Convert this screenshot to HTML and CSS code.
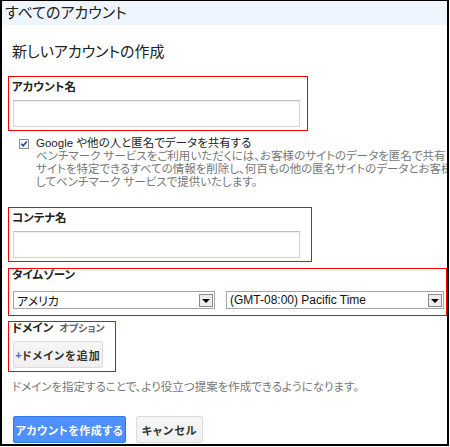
FILE: index.html
```html
<!DOCTYPE html>
<html lang="ja">
<head>
<meta charset="utf-8">
<title>新しいアカウントの作成</title>
<link rel="stylesheet" href="styles.css">
</head>
<body>
<div class="frame">
  <div class="topbar">すべてのアカウント</div>
  <div class="content">
    <h1 class="title">新しいアカウントの作成</h1>

    <div class="field field-account">
      <div class="label">アカウント名</div>
      <div class="input"></div>
    </div>

    <div class="share">
      <span class="checkbox">
        <svg width="10" height="10" viewBox="0 0 10 10">
          <rect x="0.5" y="0.5" width="9" height="9" fill="#f3f3f5" stroke="#8c8c8c"/>
          <path d="M2.3 4.8 L4.1 6.8 L7.8 2.4" fill="none" stroke="#2a4596" stroke-width="1.6"/>
        </svg>
      </span>
      <div class="share-text">
        <div class="share-main">Google や他の人と匿名でデータを共有する</div>
        <div class="share-desc">ベンチマーク サービスをご利用いただくには、お客様のサイトのデータを匿名で共有していただく</div>
        <div class="share-desc">サイトを特定できるすべての情報を削除し、何百もの他の匿名サイトのデータとお客様のデータを統合</div>
        <div class="share-desc">してベンチマーク サービスで提供いたします。</div>
      </div>
    </div>

    <div class="field field-container">
      <div class="label">コンテナ名</div>
      <div class="input"></div>
    </div>

    <div class="field field-tz">
      <div class="label label-tight">タイムゾーン</div>
      <div class="selects">
        <div class="select select-country"><span class="select-text">アメリカ</span><span class="select-btn"></span></div>
        <div class="select select-zone"><span class="select-text">(GMT-08:00) Pacific Time</span><span class="select-btn"></span></div>
      </div>
    </div>

    <div class="field field-domain">
      <div class="label label-tight">ドメイン <span class="optional">オプション</span></div>
      <div class="btn btn-add"><span class="plus">+</span>ドメインを追加</div>
    </div>

    <div class="hint">ドメインを指定することで、より役立つ提案を作成できるようになります。</div>

    <div class="actions">
      <div class="btn btn-primary">アカウントを作成する</div>
      <div class="btn btn-cancel">キャンセル</div>
    </div>
  </div>
</div>
</body>
</html>
```

FILE: styles.css
```css
html, body {
  margin: 0;
  padding: 0;
  background: #fff;
}

.frame {
  width: 449px;
  height: 446px;
  box-sizing: border-box;
  border: 2px solid #000;
  border-top: 1px solid #000;
  overflow: hidden;
  background: #fff;
  font-family: "Liberation Sans", "Noto Sans CJK JP", sans-serif;
  font-feature-settings: "palt";
  color: #222;
}

.topbar {
  height: 24px;
  line-height: 24px;
  background: #eef5fe;
  padding-left: 3px;
  font-size: 15px;
  white-space: nowrap;
}

.content {
  padding: 0 0 0 6px;
}

.title {
  margin: 17px 0 0 4px;
  font-size: 15px;
  font-weight: normal;
  line-height: 20px;
}

.field {
  box-sizing: border-box;
  border: 1px solid #f00;
  padding: 1px 0 3px 3px;
}

.field-account {
  width: 300px;
  margin-top: 14px;
}

.field-container {
  width: 304px;
  margin-top: 18px;
}

.field-tz {
  width: 439px;
  margin-top: 6px;
  padding-bottom: 6px;
}

.field-domain {
  width: 108px;
  margin-top: 5px;
}

.label {
  font-size: 11.5px;
  font-weight: bold;
  line-height: 18px;
  white-space: nowrap;
}

.label-tight {
  line-height: 11px;
}

.optional {
  font-size: 10px;
  font-weight: bold;
  color: #666;
  margin-left: 3px;
}

.input {
  box-sizing: border-box;
  width: 287px;
  height: 27px;
  margin: 4px 0 0 1px;
  background: #fff;
  border: 1px solid #d4d4d4;
  border-top-color: #c0c0c0;
  box-shadow: inset 0 1px 2px rgba(0, 0, 0, 0.08);
}

.share {
  display: flex;
  margin-top: 6px;
  padding-left: 11px;
}

.checkbox {
  width: 10px;
  height: 10px;
  margin-top: 2px;
  margin-right: 7px;
  flex: none;
}

.checkbox svg {
  display: block;
}

.share-text {
  font-size: 11.5px;
  line-height: 13px;
  white-space: nowrap;
}

.share-main {
  color: #222;
}

.share-desc {
  color: #777;
}

.selects {
  display: flex;
  gap: 11px;
  margin-top: 10px;
  padding-left: 1px;
}

.select {
  box-sizing: border-box;
  height: 18px;
  display: flex;
  align-items: center;
  justify-content: space-between;
  border: 1px solid #a5a5a5;
  background: #fff;
  padding: 0 1px 0 3px;
  font-size: 12px;
  color: #111;
}

.select-country {
  width: 202px;
}

.select-zone {
  width: 218px;
}

.select-btn {
  position: relative;
  box-sizing: border-box;
  width: 14px;
  height: 13px;
  border: 1px solid #8a8a8a;
  background: #ececec;
  flex: none;
}

.select-btn::after {
  content: "";
  position: absolute;
  left: 2px;
  top: 4px;
  border-left: 4px solid transparent;
  border-right: 4px solid transparent;
  border-top: 4px solid #000;
}

.btn {
  box-sizing: border-box;
  display: flex;
  align-items: center;
  justify-content: center;
  height: 27px;
  border-radius: 2px;
  font-size: 11px;
  font-weight: bold;
  white-space: nowrap;
}

.btn-add {
  width: 90px;
  margin: 7px 0 0 1px;
  background: linear-gradient(#f6f6f6, #efefef);
  border: 1px solid #dcdcdc;
  color: #333;
  letter-spacing: 1px;
}

.plus {
  color: #3a6fd8;
  letter-spacing: 0;
}

.hint {
  margin: 7px 0 0 4px;
  font-size: 11.5px;
  line-height: 16px;
  color: #777;
  white-space: nowrap;
}

.actions {
  display: flex;
  gap: 10px;
  margin: 21px 0 0 5px;
}

.btn-primary {
  width: 113px;
  background: #4d90fe;
  border: 1px solid #3079ed;
  color: #fff;
  letter-spacing: 0.5px;
}

.btn-cancel {
  width: 67px;
  background: linear-gradient(#f6f6f6, #f1f1f1);
  border: 1px solid #dcdcdc;
  color: #333;
  letter-spacing: 1px;
}
```
